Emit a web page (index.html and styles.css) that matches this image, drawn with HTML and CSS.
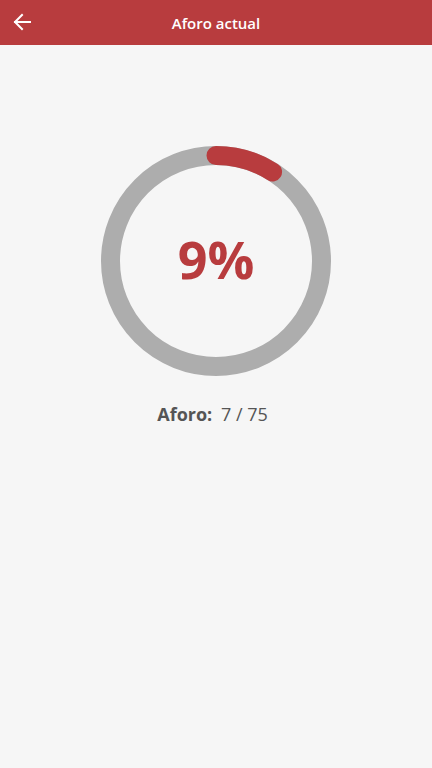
FILE: index.html
```html
<!DOCTYPE html>
<html lang="es">
<head>
<meta charset="utf-8">
<link rel="stylesheet" href="styles.css">
</head>
<body>
<header class="topbar">
  <button class="back" aria-label="Atrás">
    <svg width="20" height="20" viewBox="0 0 20 20"><path d="M18 10H3M10 3L3 10l7 7" fill="none" stroke="#fff" stroke-width="2" stroke-linecap="square"/></svg>
  </button>
  <h1 class="title">Aforo actual</h1>
</header>
<main class="content">
  <div class="gauge">
    <svg width="230" height="230" viewBox="0 0 230 230">
      <circle cx="115" cy="115" r="105.5" fill="none" stroke="#adadad" stroke-width="19"/>
      <circle cx="115" cy="115" r="105.5" fill="none" stroke="#b83c3e" stroke-width="19" stroke-linecap="round" stroke-dasharray="59.66 1000" transform="rotate(-90 115 115)"/>
    </svg>
    <div class="pct">9%</div>
  </div>
  <p class="count"><b>Aforo:</b> 7 / 75</p>
</main>
</body>
</html>
```
FILE: styles.css
```css
html, body { margin: 0; padding: 0; }
body {
  background: #f6f6f6;
  font-family: "Open Sans", "Noto Sans", sans-serif;
  width: 432px;
  height: 768px;
}
.topbar {
  height: 45px;
  background: #b83c3e;
  display: flex;
  align-items: center;
  justify-content: center;
  position: relative;
}
.back {
  position: absolute;
  left: 12px;
  top: 12px;
  background: none;
  border: 0;
  padding: 0;
  width: 20px;
  height: 20px;
}
.title {
  margin: 0;
  color: #fff;
  font-size: 15px;
  font-weight: 600;
}
.content {
  display: flex;
  flex-direction: column;
  align-items: center;
  padding-top: 101px;
}
.gauge {
  position: relative;
  width: 230px;
  height: 230px;
}
.gauge svg { display: block; }
.pct {
  position: absolute;
  inset: 0;
  display: flex;
  align-items: center;
  justify-content: center;
  padding-bottom: 6px;
  color: #b83c3e;
  font-size: 52px;
  font-weight: 700;
}
.count {
  margin: 26px 0 0;
  padding-right: 7px;
  color: #555;
  font-size: 18px;
}
.count b { margin-right: 4px; }
```
